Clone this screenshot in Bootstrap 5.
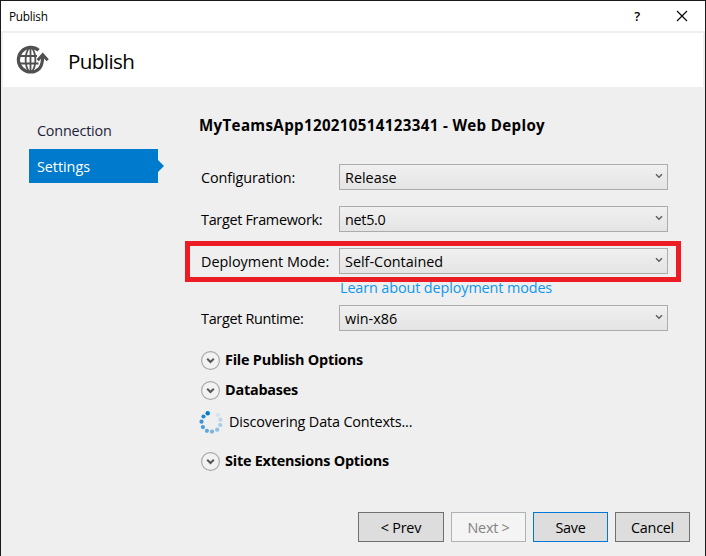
<!DOCTYPE html>
<html lang="en">
<head>
<meta charset="utf-8">
<title>Publish</title>
<link href="https://cdn.jsdelivr.net/npm/bootstrap@5.3.0/dist/css/bootstrap.min.css" rel="stylesheet">
<style>
body{font-family:"Open Sans","Noto Sans",sans-serif;font-size:14.4px;line-height:20px;color:#000;background:#efefef;overflow:hidden}
svg{display:block;flex:none}
.dialog{width:706px;height:556px;border:1px solid #1b191b;border-bottom:0;background:#efefef}
.titlebar{height:30px;font-size:11.8px;letter-spacing:-.25px;padding-left:8px;padding-right:17px}
.help{font-size:13px;font-weight:600;margin-right:36px}
.banner{height:54px;margin:2px 2px 0 2px;padding-left:11px}
.banner h1{font-size:20.6px;line-height:28px;letter-spacing:-.6px;font-weight:400;margin-left:18px;padding-top:1px}
.side{width:134px;margin-left:28px;padding-top:27px}
.side a{height:34px;width:129px;padding:0 0 1px 8px;color:#1e1e3c;text-decoration:none;letter-spacing:-.2px}
.side a.active{background:#007acc;color:#fff;margin-top:1px;letter-spacing:-.05px;padding:2px 0 0 8px}
.side a.active::after{content:"";position:absolute;left:100%;top:11px;border:6px solid transparent;border-left-color:#007acc;border-right:0}
.main{margin-left:22px;width:496px}
.main h2{font-size:15.1px;line-height:20px;font-weight:700;margin:28px 0 29px 14px;letter-spacing:.35px}
.field{height:26px;padding-left:16px;margin-bottom:16px}
.field label{width:138px;padding-top:2px;letter-spacing:-.1px;white-space:nowrap}
.combo{width:329px;height:26px;border:1px solid #acacac;background:linear-gradient(#f0f0f0,#e4e4e4);padding:0 4px 0 5px}
.combo span{padding-top:2px}
.combo svg{margin-bottom:2px}
.marked{border:5px solid #ed1c24;height:41px;margin-top:-7px;padding:2px 0 0 0}
.marked .field{padding-left:11px;margin:0}
.hint{margin:-3px 0 8px 155px;height:18px;line-height:18px;color:#0e97f0;letter-spacing:-.11px}
.fold{height:20px;padding-left:16px;margin-bottom:10px;font-weight:700;letter-spacing:-.22px;gap:5px}
.runtime{margin-bottom:19px}
.busy{height:24px;padding-left:14px;margin-bottom:17px;gap:6px;letter-spacing:-.15px}
.tight{letter-spacing:-.3px!important}
.even{letter-spacing:0!important}
.actions{gap:7px;margin:0 15px 14px 0}
.cmd{height:30px;width:75px;border:1px solid #707070;border-radius:0;background:#ddd;font-size:14.4px;line-height:20px;padding:1px 0 0;color:#000;letter-spacing:-.25px}
.cmd.wide{width:86px}
.cmd.main-cmd{border-color:#0078d7}
.cmd:disabled{background:#f4f4f4;border-color:#adb2b5;color:#838383;opacity:1}
</style>
</head>
<body>
<svg width="0" height="0" class="position-absolute">
  <symbol id="chev" viewBox="0 0 8 6"><path d="M1 1.200 4 4.200 7 1.200" fill="none" stroke="#606060" stroke-width="1.5"/></symbol>
  <symbol id="fold" viewBox="0 0 19 19"><circle cx="9.5" cy="9.5" r="8.9" fill="#f2f2f2" stroke="#a6a6a6" stroke-width="1.1"/><path d="M6.2 7.7 9.5 11 12.8 7.7" fill="none" stroke="#555" stroke-width="2"/></symbol>
</svg>
<div class="dialog d-flex flex-column">
  <div class="titlebar bg-white d-flex align-items-center">
    <span class="me-auto">Publish</span>
    <span class="help">?</span>
    <svg width="12" height="12" viewBox="0 0 12 12"><path d="M1 1 11 11M11 1 1 11" stroke="#000" stroke-width="1.1"/></svg>
  </div>
  <div class="banner bg-white d-flex align-items-center">
    <svg width="36" height="32" viewBox="14 44 36 32" fill="none" stroke="#505052">
      <path d="M38.6 50.3A12.3 12.3 0 1 0 39.5 68.3Q42.6 65 42.7 56" stroke-width="3.2"/>
      <path d="M37.7 60.2 42.7 54.8 47.7 60.2" stroke-width="3"/>
      <path d="M19 56H37M19 63.5H38.5M29 48C24.5 54 24.5 65.5 29 71.5M32 48C36.5 54 36.5 65.5 32 71.5M30.5 48V72" stroke-width="1.8"/>
    </svg>
    <h1 class="mb-0">Publish</h1>
  </div>
  <div class="d-flex flex-grow-1">
    <nav class="side d-flex flex-column">
      <a class="d-flex align-items-center" href="#">Connection</a>
      <a class="active d-flex align-items-center position-relative" href="#">Settings</a>
    </nav>
    <main class="main">
      <h2>MyTeamsApp120210514123341 - Web Deploy</h2>
      <div class="field d-flex align-items-center">
        <label>Configuration:</label>
        <div class="combo d-flex align-items-center justify-content-between"><span>Release</span><svg width="8" height="6"><use href="#chev"/></svg></div>
      </div>
      <div class="field d-flex align-items-center">
        <label class="tight">Target Framework:</label>
        <div class="combo d-flex align-items-center justify-content-between"><span class="tight">net5.0</span><svg width="8" height="6"><use href="#chev"/></svg></div>
      </div>
      <div class="marked">
        <div class="field d-flex align-items-center">
          <label class="even">Deployment Mode:</label>
          <div class="combo d-flex align-items-center justify-content-between"><span>Self-Contained</span><svg width="8" height="6"><use href="#chev"/></svg></div>
        </div>
      </div>
      <div class="hint">Learn about deployment modes</div>
      <div class="field runtime d-flex align-items-center">
        <label class="tight">Target Runtime:</label>
        <div class="combo d-flex align-items-center justify-content-between"><span>win-x86</span><svg width="8" height="6"><use href="#chev"/></svg></div>
      </div>
      <div class="fold d-flex align-items-center"><svg width="19" height="19"><use href="#fold"/></svg>File Publish Options</div>
      <div class="fold d-flex align-items-center"><svg width="19" height="19"><use href="#fold"/></svg>Databases</div>
      <div class="busy d-flex align-items-center">
        <svg width="24" height="24" viewBox="199 410 24 24" fill="#007acc">
          <circle cx="207.7" cy="413.2" r="2.2"/>
          <circle cx="203.5" cy="416.5" r="2.1" opacity=".88"/>
          <circle cx="201.5" cy="421.7" r="2.1" opacity=".78"/>
          <circle cx="202.9" cy="427.1" r="2.1" opacity=".7"/>
          <circle cx="206.9" cy="430.8" r="2.1" opacity=".6"/>
          <circle cx="212" cy="431.6" r="2.1" opacity=".5"/>
          <circle cx="217.2" cy="429.7" r="2.1" opacity=".4"/>
          <circle cx="220.2" cy="425" r="2.1" opacity=".3"/>
          <circle cx="220.4" cy="419.7" r="2.1" opacity=".2"/>
          <circle cx="217.8" cy="415" r="2.1" opacity=".1"/>
        </svg>
        Discovering Data Contexts...
      </div>
      <div class="fold d-flex align-items-center"><svg width="19" height="19"><use href="#fold"/></svg>Site Extensions Options</div>
    </main>
  </div>
  <div class="actions d-flex justify-content-end">
    <button class="btn cmd wide">&lt; Prev</button>
    <button class="btn cmd" disabled>Next &gt;</button>
    <button class="btn cmd main-cmd">Save</button>
    <button class="btn cmd">Cancel</button>
  </div>
</div>
<script src="https://cdn.jsdelivr.net/npm/bootstrap@5.3.0/dist/js/bootstrap.bundle.min.js"></script>
</body>
</html>
